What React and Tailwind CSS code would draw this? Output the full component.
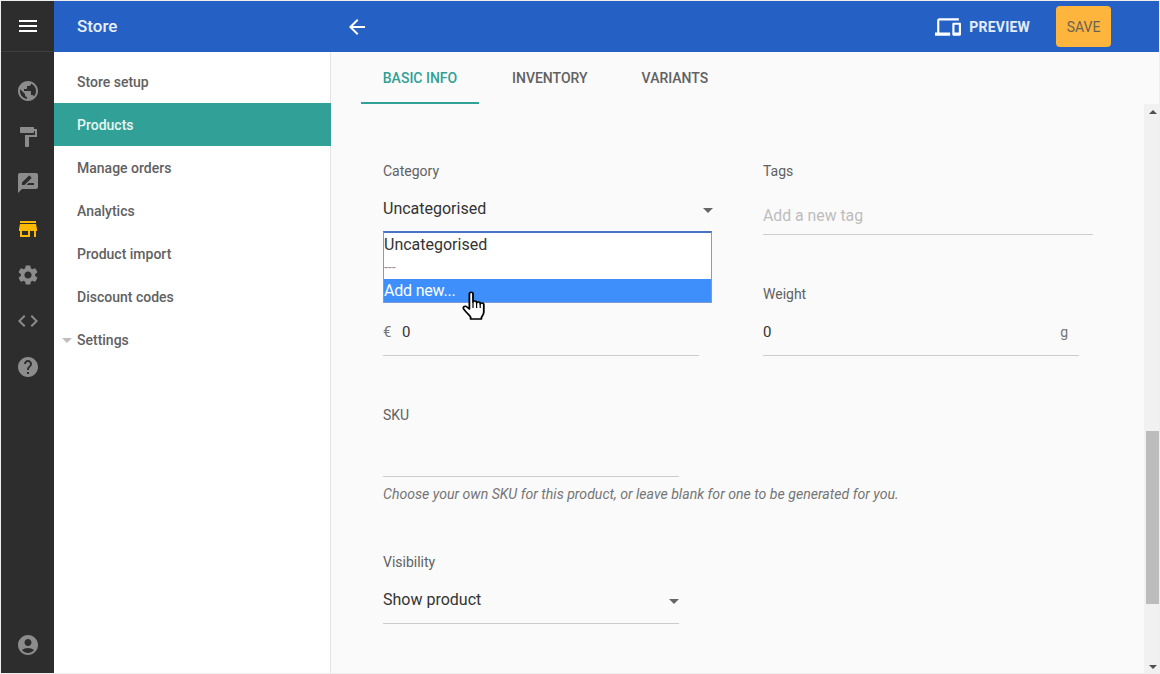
import React from 'react';
import { MdMenu, MdPublic, MdFormatPaint, MdRateReview, MdStore, MdSettings, MdCode, MdHelp, MdAccountCircle, MdDevices, MdArrowBack } from 'react-icons/md';

const rail = [
  [MdPublic, 'text-[#8c8c8c]'],
  [MdFormatPaint, 'text-[#8c8c8c]'],
  [MdRateReview, 'text-[#8c8c8c]'],
  [MdStore, 'text-[#fcb900]'],
  [MdSettings, 'text-[#8c8c8c]'],
  [MdCode, 'text-[#8c8c8c]'],
  [MdHelp, 'text-[#8c8c8c]'],
];

const nav = ['Store setup', 'Products', 'Manage orders', 'Analytics', 'Product import', 'Discount codes'];

function Caret() {
  return <span className="mt-[2px] w-0 h-0 border-l-[5px] border-r-[5px] border-t-[5px] border-l-transparent border-r-transparent border-t-[#666]" />;
}

function Hand() {
  return (
    <svg width="24" height="30" viewBox="0 0 20 30" preserveAspectRatio="none" className="absolute left-[77px] top-[58px]">
      <path d="M7 2.500c0-1.600 3-1.600 3 0V11c0-1.400 3-1.400 3 0v1c0-1.400 3-1.400 3 0v1c0-1.300 3-1.300 3 .2V21c0 2.500-1 3.500-2 5.500v1.500H8v-2c-1-2-5-6-6-8.500-.6-1.800 1.500-3 3-1.500l2 2z" fill="#fff" stroke="#000" strokeWidth="1.500" strokeLinejoin="round" />
      <path d="M10 11v6M13 12v5M16 13v4" stroke="#000" strokeWidth="1" />
    </svg>
  );
}

export default function App() {
  return (
    <div className="w-[1160px] h-[674px] border border-[#eeeeee] flex overflow-hidden bg-[#fafafa] font-['Roboto',sans-serif]">
      <aside className="w-[53px] shrink-0 bg-[#2d2d2d] flex flex-col items-center">
        <div className="w-full h-[51px] flex items-center justify-center border-b border-[#3f3f3f] text-white">
          <MdMenu size={24} />
        </div>
        <div className="flex flex-col items-center gap-[22px] pt-[27px]">
          {rail.map(([Icon, color], i) => (
            <Icon key={i} size={24} className={color} />
          ))}
        </div>
        <MdAccountCircle size={24} className="text-[#8c8c8c] mt-auto mb-[16px]" />
      </aside>

      <div className="flex-1 flex flex-col min-w-0">
        <header className="h-[51px] shrink-0 bg-[#2561c5] flex items-center text-white">
          <div className="w-[277px] pl-[23px] text-[17px] font-medium text-[#e8f0fb]">Store</div>
          <MdArrowBack size={24} className="ml-[14px]" />
          <div className="ml-auto flex items-center">
            <MdDevices size={26} className="mr-[8px]" />
            <span className="pt-[2px] text-[14px] font-bold tracking-[0.2px] text-[#e3edfb]">PREVIEW</span>
            <button className="ml-[26px] mr-[48px] w-[55px] h-[41px] pt-[2px] rounded-[4px] bg-[#fdb53e] text-[#6a6252] text-[14px]">SAVE</button>
          </div>
        </header>

        <div className="flex-1 flex min-h-0">
          <nav className="w-[277px] shrink-0 bg-white border-r border-[#e4e4e4] pt-[9px]">
            {nav.map((n) => (
              <div
                key={n}
                className={`h-[43px] flex items-center pl-[23px] text-[14px] font-medium ${n === 'Products' ? 'bg-[#31a096] text-[#e6f5f3] -mr-px -mt-px mb-px pt-[2px]' : 'text-[#616161]'}`}
              >
                {n}
              </div>
            ))}
            <div className="h-[43px] flex items-center pl-[8px] text-[14px] font-medium text-[#616161]">
              <span className="w-0 h-0 border-l-[5px] border-r-[5px] border-t-[5px] border-l-transparent border-r-transparent border-t-[#bdbdbd] mr-[5px]" />
              Settings
            </div>
          </nav>

          <main className="flex-1 flex flex-col min-w-0">
            <div className="h-[52px] shrink-0 pl-[30px] flex text-[14px] font-medium text-[#616161]">
              <div className="w-[118px] pt-[2px] flex items-center justify-center text-[#31a096] border-b-2 border-[#31a096]">BASIC INFO</div>
              <div className="ml-[33px] flex items-center">INVENTORY</div>
              <div className="ml-[54px] flex items-center">VARIANTS</div>
            </div>

            <div className="flex-1 flex min-h-0">
              <div className="flex-1 pl-[52px] pt-[57px] text-[#616161]">
                <div className="flex">
                  <div className="relative w-[380px]">
                    <div className="text-[14px] leading-[20px]">Category</div>
                    <div className="w-[330px] h-[24px] mt-[16px] flex items-center justify-between text-[16px] text-[#333]">
                      <span>Uncategorised</span>
                      <Caret />
                    </div>
                    <div className="absolute left-0 top-[70px] w-[329px] h-[72px] z-10 bg-white border border-[#7a9bd8] border-t-2 border-t-[#4a72c4] text-[16px] leading-[23px] text-[#333]">
                      <div className="h-[23px]">Uncategorised</div>
                      <div className="h-[23px] text-[#999] text-[14px]">---</div>
                      <div className="h-[23px] bg-[#3e8ffc] text-white tracking-[-0.2px]">Add new...</div>
                      <Hand />
                    </div>
                  </div>
                  <div className="w-[330px]">
                    <div className="text-[14px] leading-[20px]">Tags</div>
                    <div className="h-[43px] mt-[11px] pt-[12px] border-b border-[#ccc] text-[15.8px] leading-[24px] text-[#bdbdbd]">Add a new tag</div>
                  </div>
                </div>

                <div className="flex mt-[49px]">
                  <div className="w-[380px]">
                    <div className="h-[20px]" />
                    <div className="w-[316px] h-[49px] mt-[3px] pt-[2px] border-b border-[#ccc] flex items-center text-[15px]">
                      <span className="w-[19px] text-[#757575] text-[15px]">€</span>
                      <span className="text-[#333]">0</span>
                    </div>
                  </div>
                  <div className="w-[316px]">
                    <div className="text-[14px] leading-[20px]">Weight</div>
                    <div className="h-[49px] mt-[3px] pt-[2px] border-b border-[#ccc] flex items-center justify-between pr-[11px] text-[15px]">
                      <span className="text-[#333]">0</span>
                      <span className="text-[#757575] text-[14px]">g</span>
                    </div>
                  </div>
                </div>

                <div className="mt-[49px] w-[296px]">
                  <div className="text-[14px] leading-[20px]">SKU</div>
                  <div className="h-[49px] mt-[3px] border-b border-[#ccc]" />
                </div>
                <div className="mt-[8px] text-[14.1px] leading-[18px] italic text-[#757575]">Choose your own SKU for this product, or leave blank for one to be generated for you.</div>

                <div className="mt-[49px] w-[296px]">
                  <div className="text-[14px] leading-[20px]">Visibility</div>
                  <div className="h-[49px] mt-[3px] pt-[2px] border-b border-[#ccc] flex items-center justify-between text-[16px] text-[#333]">
                    <span>Show product</span>
                    <Caret />
                  </div>
                </div>
              </div>

              <div className="w-[15px] shrink-0 bg-[#f1f1f1] pl-[2px] flex flex-col items-center relative">
                <span className="mt-[6px] w-0 h-0 border-l-[4px] border-r-[4px] border-b-[4px] border-l-transparent border-r-transparent border-b-[#505050]" />
                <div className="w-full h-[173px] bg-[#bcbcbc] mt-[317px]" />
                <span className="mt-auto mb-[4px] w-0 h-0 border-l-[4px] border-r-[4px] border-t-[4px] border-l-transparent border-r-transparent border-t-[#505050]" />
              </div>
            </div>
          </main>
        </div>
      </div>
    </div>
  );
}
